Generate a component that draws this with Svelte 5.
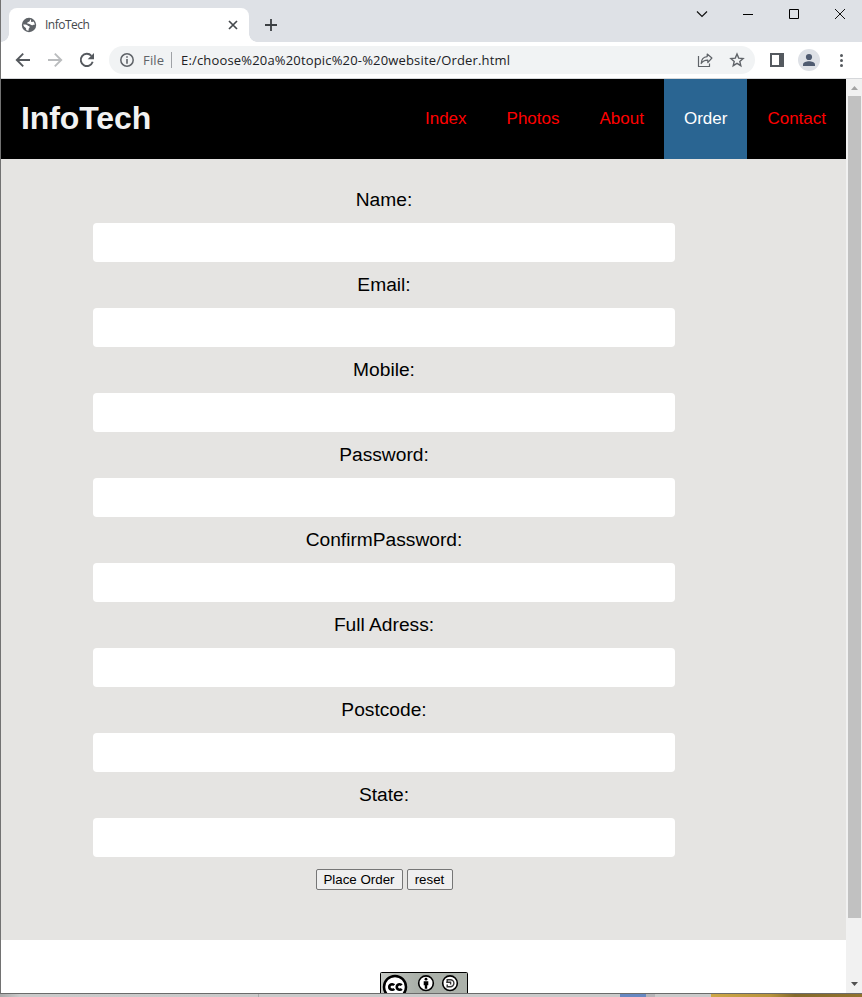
<script>
  const links = ['Index', 'Photos', 'About', 'Order', 'Contact'];
  const fields = ['Name', 'Email', 'Mobile', 'Password', 'ConfirmPassword', 'Full Adress', 'Postcode', 'State'];
</script>

<div class="window">
  <header class="titlebar">
    <div class="tab">
      <svg class="globe" width="16" height="16" viewBox="0 0 16 16">
        <circle cx="8" cy="8" r="7.2" fill="#5f6368" />
        <path d="M9.300 2.300C8.700 3 9.200 3.700 8.600 4.300 7.900 5 6.600 4.800 6.300 5.800c-.2.900.8 1.100 1.900 1.100 1.400 0 1.700 1.300 2.800 1.300.9 0 1.500-.8 2.800-.5a5.900 5.900 0 0 0-1.300-3.100c-.8.5-1.800.7-2.300.1-.4-.6.100-1.200-.3-1.800zM2.200 7.500c1.600-.2 3.600-.1 4.500 1 .5.700 1.500.5 1.900 1.200.4.900-.6 1.200-.9 2-.2.600-.1 1.300-.1 2.100a5.900 5.900 0 0 1-2.500-.8c.3-.9.200-1.500-.4-2.100C3.900 10.100 2.500 9.500 2.200 7.500z" fill="#fff" />
      </svg>
      <span class="tab-title">InfoTech</span>
      <svg class="close" width="10" height="10" viewBox="0 0 10 10"><path d="M1 1l8 8M9 1L1 9" stroke="#45494d" stroke-width="1.7" /></svg>
    </div>
    <svg class="plus" width="12" height="12" viewBox="0 0 12 12"><path d="M6 0v12M0 6h12" stroke="#3c4043" stroke-width="1.8" /></svg>
    <div class="controls">
      <svg width="12" height="12" viewBox="0 0 12 12"><path d="M1 3.5l5 5 5-5" fill="none" stroke="#111" stroke-width="1.2" /></svg>
      <svg width="12" height="12" viewBox="0 0 12 12"><path d="M1 6.5h10" stroke="#000" /></svg>
      <svg width="12" height="12" viewBox="0 0 12 12"><path d="M1.500 1.500h9v9h-9z" fill="none" stroke="#000" /></svg>
      <svg width="12" height="12" viewBox="0 0 12 12"><path d="M1 1l10 10M11 1L1 11" stroke="#111" /></svg>
    </div>
  </header>

  <div class="toolbar">
    <svg class="back" width="16" height="16" viewBox="0 0 16 16"><path d="M15 8H2M8.2 1.6L1.8 8l6.4 6.4" fill="none" stroke="#55595e" stroke-width="1.9" /></svg>
    <svg class="forward" width="16" height="16" viewBox="0 0 16 16"><path d="M1 8h13M7.8 1.6L14.2 8l-6.400 6.400" fill="none" stroke="#babcbe" stroke-width="1.9" /></svg>
    <svg class="reload" width="16" height="16" viewBox="0 0 16 16">
      <path d="M13.700 9.800A6.100 6.100 0 1 1 12.400 3.800" fill="none" stroke="#55595e" stroke-width="1.9" />
      <path d="M15 1v6.300H8.700z" fill="#55595e" />
    </svg>
    <div class="address">
      <svg class="info" width="14" height="14" viewBox="0 0 14 14">
        <circle cx="7" cy="7" r="6.2" fill="none" stroke="#5f6368" stroke-width="1.5" />
        <path d="M7 3.200v1.600M7 6v4.800" stroke="#5f6368" stroke-width="1.6" />
      </svg>
      <span class="scheme">File</span>
      <i></i>
      <span class="url">E:/choose%20a%20topic%20-%20website/Order.html</span>
      <svg class="share" width="16" height="16" viewBox="0 0 16 16">
        <path d="M1.500 4v10.500h11v-3M4.200 11.500C4.300 7.800 6.300 5 10.200 4.600V2l4.700 4-4.100 4.600V8.100C8 8 5.800 9 4.200 11.500z" fill="none" stroke="#5f6368" stroke-width="1.200" stroke-linejoin="round" />
      </svg>
      <svg class="star" width="16" height="16" viewBox="0 0 16 16">
        <path d="M8 2l1.700 4.100 4.400.4-3.300 2.900 1 4.300L8 11.400l-3.800 2.300 1-4.300L1.900 6.500l4.400-.4z" fill="none" stroke="#5f6368" stroke-width="1.4" />
      </svg>
    </div>
    <svg class="panel" width="14" height="14" viewBox="0 0 14 14"><path d="M0 0h14v14H0zM2 2v10h7V2z" fill="#54595f" fill-rule="evenodd" /></svg>
    <svg class="avatar" width="22" height="22" viewBox="0 0 22 22">
      <circle cx="11" cy="11" r="11" fill="#dee1e6" />
      <circle cx="11" cy="8" r="3.100" fill="#4f5b70" />
      <path d="M5 17v-1.500c0-2.300 3.500-3.300 6-3.300s6 1 6 3.300V17z" fill="#4f5b70" />
    </svg>
    <svg class="dots" width="4" height="14" viewBox="0 0 4 14"><g fill="#55595e"><circle cx="1.500" cy="2.500" r="1.500" /><circle cx="1.500" cy="7.500" r="1.500" /><circle cx="1.500" cy="12.400" r="1.500" /></g></svg>
  </div>

  <div class="viewport">
    <div class="page">
      <nav>
        <h1>InfoTech</h1>
        <div class="links">
          {#each links as link}
            <a href="#{link}" class:active={link === 'Order'}>{link}</a>
          {/each}
        </div>
      </nav>
      <form>
        {#each fields as field}
          <label>
            <span>{field}:</span>
            <input type={field.includes('Password') ? 'password' : 'text'} />
          </label>
        {/each}
        <div class="buttons">
          <button type="button">Place Order</button>
          <button type="reset">reset</button>
        </div>
      </form>
      <footer>
        <svg width="88" height="31" viewBox="0 0 88 31">
          <defs><linearGradient id="shade"><stop offset="0" stop-color="#c5c8c3" /><stop offset=".4" stop-color="#abb1aa" /></linearGradient></defs>
          <rect x=".5" y=".5" width="87" height="30" rx="1" fill="url(#shade)" stroke="#000" />
          <circle cx="15" cy="15" r="11" fill="#fff" stroke="#000" stroke-width="2.500" />
          <g fill="none" stroke="#000" stroke-width="2.600">
            <path d="M14.200 13.200a2.800 2.800 0 1 0 0 3.600M21.700 13.200a2.800 2.800 0 1 0 0 3.600" />
          </g>
          <circle cx="46" cy="11.200" r="7.300" fill="#fff" stroke="#000" stroke-width="1.600" />
          <circle cx="46" cy="7.200" r="1.400" />
          <path d="M43.700 9.200h4.600v4h-1.100v3.600h-2.400v-3.600h-1.100z" />
          <circle cx="70" cy="11.200" r="7.300" fill="#fff" stroke="#000" stroke-width="1.600" />
          <path d="M67.200 10V7.700h3.200a3.400 3.400 0 0 1 0 7h-3.200v-2.200M66.200 10.300h4.400v2.200" fill="none" stroke="#333" stroke-width="1.400" />
        </svg>
      </footer>
    </div>
    <div class="scrollbar">
      <svg width="7" height="4" viewBox="0 0 7 4"><path d="M0 4L3.500 0 7 4z" fill="#a3a3a3" /></svg>
      <div class="thumb"></div>
      <svg class="down" width="7" height="4" viewBox="0 0 7 4"><path d="M0 0h7L3.500 4z" fill="#505050" /></svg>
    </div>
  </div>
</div>
<div class="desktop"></div>

<style>
  :global(body) { background: #fff; overflow: hidden; }
  svg { display: block; flex: none; }
  .window { box-sizing: border-box; width: 862px; height: 994px; border-left: 1px solid #727272; border-bottom: 1px solid #6b6b6b; display: flex; flex-direction: column; overflow: hidden; }
  .titlebar { height: 42px; flex: none; background: #dee1e6; display: flex; }
  .tab { position: relative; box-sizing: border-box; width: 240px; height: 34px; margin: 8px 0 0 8px; padding: 0 11px 0 12px; border-radius: 8px 8px 0 0; background: #fff; display: flex; align-items: center; }
  .tab::before, .tab::after { content: ''; position: absolute; bottom: 0; width: 8px; height: 8px; }
  .tab::before { left: -8px; background: radial-gradient(circle at 0 0, transparent 7.5px, #fff 8px); }
  .tab::after { right: -8px; background: radial-gradient(circle at 100% 0, transparent 7.5px, #fff 8px); }
  .tab-title { margin-left: 8px; flex: 1; font: 12px/16px 'Open Sans', sans-serif; letter-spacing: -0.5px; color: #45494d; }
  .plus { margin: 19px 0 0 16px; }
  .controls { display: flex; gap: 34px; margin: 8px 16px 0 auto; }
  .toolbar { box-sizing: border-box; height: 37px; flex: none; border-bottom: 1px solid #d5d7da; background: #fff; display: flex; align-items: center; padding-left: 14px; }
  .forward, .reload { margin-left: 16px; }
  .address { width: 646px; height: 28px; box-sizing: border-box; margin-left: 14px; padding: 0 10px 0 11px; border-radius: 14px; background: #f1f3f4; display: flex; align-items: center; font: 13px/20px 'Open Sans', sans-serif; letter-spacing: 0.17px; }
  .scheme { width: 21px; margin-left: 9px; color: #5f6368; white-space: nowrap; }
  .address i { width: 1px; height: 16px; margin: 0 9px 0 7px; background: #9fa2a6; }
  .url { flex: 1; color: #202124; white-space: nowrap; }
  .star { margin-left: 16px; }
  .panel { margin-left: 15px; }
  .avatar { margin-left: 14px; }
  .dots { margin-left: 20px; }
  .viewport { flex: 1; display: flex; min-height: 0; }
  .page { width: 845px; overflow: hidden; background: #fff; font-family: 'Liberation Sans', Arial, sans-serif; }
  nav { height: 80px; background: #000; display: flex; justify-content: space-between; }
  h1 { margin: 0 0 0 20px; font-size: 32px; line-height: 78px; letter-spacing: -0.1px; color: #f2f2f2; }
  .links { display: flex; }
  .links a { padding: 0 20px; font-size: 17px; line-height: 79px; color: #f00; text-decoration: none; }
  .links a.active { background: #2a6592; color: #fff; }
  form { box-sizing: border-box; height: 781px; padding: 18px 171px 0 92px; background: #e5e4e2; }
  label { display: flex; flex-direction: column; height: 85px; }
  label span { height: 46px; line-height: 46px; font-size: 19.2px; text-align: center; color: #000; }
  input { box-sizing: border-box; width: 100%; height: 39px; margin: 0; border: 0; border-radius: 4px; background: #fff; }
  .buttons { display: flex; justify-content: center; gap: 4px; padding-top: 12px; }
  button { box-sizing: border-box; width: 87px; height: 21px; padding: 0; border: 1px solid #767676; border-radius: 2px; background: #efefef; font: 13.333px/18px 'Liberation Sans', Arial, sans-serif; color: #000; white-space: nowrap; }
  button + button { width: 46px; }
  footer { padding: 32px 0 0 379px; }
  .scrollbar { width: 16px; background: #f1f1f1; display: flex; flex-direction: column; align-items: center; padding-top: 7px; box-sizing: border-box; }
  .thumb { width: 13px; height: 822px; margin-top: 6px; background: #c1c1c1; }
  .down { margin: auto 0 7px; }
  .desktop { height: 3px; background: linear-gradient(90deg, #aaa 0, #cacaca 20px, #c9c9c9 258px, #aaa 258px, #aaa 259px, #cacaca 259px, #cacaca 620px, #6788c1 620px, #6788c1 646px, #b5b4b8 646px, #b5b4b8 655px, #cacaca 655px, #cacaca 711px, #cda747 711px, #b8943c 770px, #846a2b 795px, #92732d 862px); }
</style>
